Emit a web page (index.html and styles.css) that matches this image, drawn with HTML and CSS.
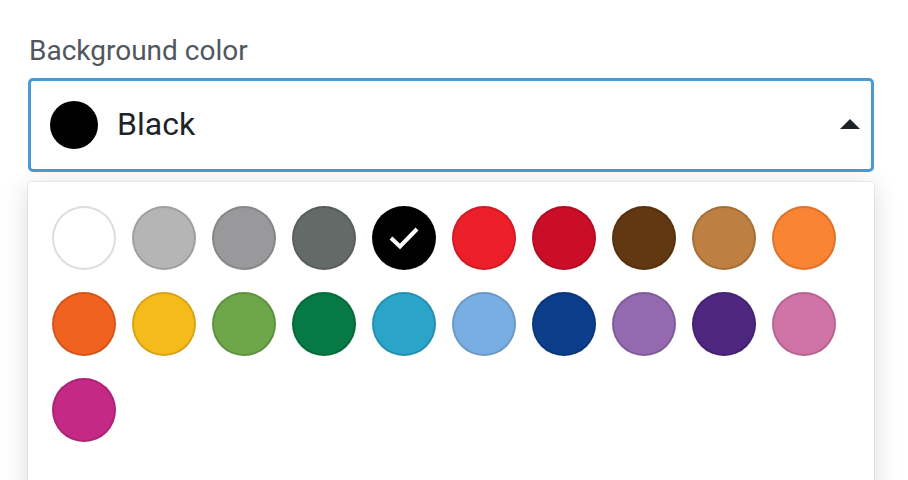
FILE: index.html
```html
<!DOCTYPE html>
<html lang="en">
<head>
<meta charset="utf-8">
<link rel="stylesheet" href="styles.css">
</head>
<body>
<div class="field">
  <div class="label">Background color</div>
  <div class="select">
    <span class="dot"></span>
    <span class="value">Black</span>
    <span class="arrow"></span>
  </div>
  <div class="panel">
    <div class="swatches">
      <span class="sw sw-white" style="background:#ffffff"></span>
      <span class="sw" style="background:#b5b5b5"></span>
      <span class="sw" style="background:#99999b"></span>
      <span class="sw" style="background:#636a67"></span>
      <span class="sw sw-selected" style="background:#000000">
        <svg width="32" height="24" viewBox="0 0 32 24"><path d="M3 13 L12 21.5 L29 4" fill="none" stroke="#fff" stroke-width="4"/></svg>
      </span>
      <span class="sw" style="background:#ec1f2b"></span>
      <span class="sw" style="background:#cb0e28"></span>
      <span class="sw" style="background:#623812"></span>
      <span class="sw" style="background:#bd7f42"></span>
      <span class="sw" style="background:#f98434"></span>
      <span class="sw" style="background:#f16221"></span>
      <span class="sw" style="background:#f4bb1a"></span>
      <span class="sw" style="background:#6ea64a"></span>
      <span class="sw" style="background:#077945"></span>
      <span class="sw" style="background:#2ba4c9"></span>
      <span class="sw" style="background:#79aee2"></span>
      <span class="sw" style="background:#0c3e8b"></span>
      <span class="sw" style="background:#9369b0"></span>
      <span class="sw" style="background:#4f2780"></span>
      <span class="sw" style="background:#d073a6"></span>
      <span class="sw" style="background:#c42985"></span>
    </div>
  </div>
</div>
</body>
</html>
```
FILE: styles.css
```css
html, body {
  margin: 0;
  padding: 0;
  background: #ffffff;
  overflow: hidden;
}
body {
  font-family: Roboto, "Liberation Sans", sans-serif;
}
.field {
  padding: 35px 34px 0 28px;
}
.label {
  font-size: 28px;
  line-height: 32px;
  color: #50575e;
  padding-left: 1px;
  margin-bottom: 11px;
}
.select {
  box-sizing: border-box;
  height: 94px;
  border: 3px solid #4a9ad6;
  border-radius: 5px;
  display: flex;
  align-items: center;
  padding: 0 11px 0 19px;
}
.dot {
  width: 48px;
  height: 48px;
  border-radius: 50%;
  background: #000;
  flex: none;
}
.value {
  font-size: 32px;
  color: #1e2327;
  margin-left: 19px;
  flex: 1;
  padding-bottom: 2px;
}
.arrow {
  width: 0;
  height: 0;
  border-left: 10px solid transparent;
  border-right: 10px solid transparent;
  border-bottom: 10px solid #1e2327;
  margin-top: -2px;
}
.panel {
  margin-top: 10px;
  height: 300px;
  background: #fff;
  border-radius: 4px;
  box-shadow: 0 0 0 1px rgba(0,0,0,0.05), 0 4px 26px rgba(0,0,0,0.15);
  padding: 24px;
}
.swatches {
  display: grid;
  grid-template-columns: repeat(10, 64px);
  column-gap: 16px;
  row-gap: 22px;
}
.sw {
  width: 64px;
  height: 64px;
  border-radius: 50%;
  box-sizing: border-box;
  box-shadow: inset 0 0 0 2px rgba(0,0,0,0.12);
  display: flex;
  align-items: center;
  justify-content: center;
}
.sw-white {
  box-shadow: inset 0 0 0 2px #dddddd;
}
.sw-selected {
  box-shadow: none;
}
.sw-selected svg {
  margin-top: -2px;
}
```
